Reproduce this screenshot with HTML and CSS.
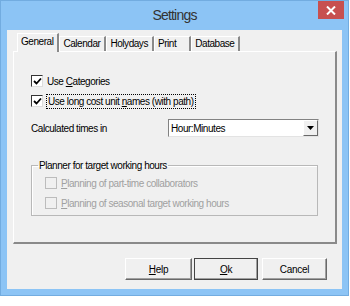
FILE: index.html
```html
<!DOCTYPE html>
<html lang="en">

<head>
    <meta charset="UTF-8">
    <meta name="viewport" content="width=device-width, initial-scale=1.0">
    <title>Settings</title>
    <link rel="stylesheet" href="styles.css">
</head>

<body>
    <div class="window">
        <div class="titlebar">
            <span></span>
            <span class="title">Settings</span>
            <button class="close">
                <svg width="10" height="9" viewBox="0 0 10 9"><path d="M1 0.5 L9 8.5 M9 0.5 L1 8.5" stroke="#fff" stroke-width="2"/></svg>
            </button>
        </div>
        <div class="client">
            <div class="tabs">
                <div class="tab active">General</div>
                <div class="tab">Calendar</div>
                <div class="tab">Holydays</div>
                <div class="tab tab-print">Print</div>
                <div class="tab">Database</div>
            </div>
            <div class="panel">
                <label class="check">
                    <span class="box"><svg width="9" height="9" viewBox="0 0 9 9"><path d="M1 4 L3.5 6.5 L8 1.5" stroke="#000" stroke-width="1.8" fill="none"/></svg></span>
                    <span>Use <u>C</u>ategories</span>
                </label>
                <label class="check">
                    <span class="box"><svg width="9" height="9" viewBox="0 0 9 9"><path d="M1 4 L3.5 6.5 L8 1.5" stroke="#000" stroke-width="1.8" fill="none"/></svg></span>
                    <span class="focus">Use long cost unit <u>n</u>ames (with path)</span>
                </label>
                <div class="row">
                    <span class="row-label">Calculated times in</span>
                    <div class="combo">
                        <span class="combo-text">Hour:Minutes</span>
                        <span class="combo-btn"><svg width="7" height="4" viewBox="0 0 7 4"><path d="M0 0 H7 L3.5 4 Z" fill="#000"/></svg></span>
                    </div>
                </div>
                <fieldset class="group">
                    <legend>Planner for target working hours</legend>
                    <label class="check disabled">
                        <span class="box"></span>
                        <span><u>P</u>lanning of part-time collaborators</span>
                    </label>
                    <label class="check disabled">
                        <span class="box"></span>
                        <span><u>P</u>lanning of seasonal target working hours</span>
                    </label>
                </fieldset>
            </div>
            <div class="buttons">
                <button class="btn btn-help"><u>H</u>elp</button>
                <button class="btn btn-ok"><u>O</u>k</button>
                <button class="btn btn-cancel">Cancel</button>
            </div>
        </div>
    </div>
</body>

</html>
```

FILE: styles.css
```css
* {
    margin: 0;
    padding: 0;
    box-sizing: border-box;
}

body {
    background-color: #fff;
    font-family: "Liberation Sans", Arial, sans-serif;
    font-size: 10px;
    letter-spacing: -0.45px;
    color: #000;
}

.window {
    width: 349px;
    height: 296px;
    background-color: #8cc4f5;
    border: 1px solid #72ace0;
    display: flex;
    flex-direction: column;
}

.titlebar {
    height: 29px;
    display: grid;
    grid-template-columns: 1fr auto 1fr;
    align-items: start;
}

.title {
    font-size: 14px;
    letter-spacing: -0.8px;
    color: #333;
    padding-top: 6px;
}

.close {
    justify-self: end;
    margin-right: 4px;
    width: 26px;
    height: 18px;
    border: none;
    background-color: #c75050;
    display: flex;
    align-items: center;
    justify-content: center;
}

.client {
    flex: 1;
    margin: 0 6px 6px 6px;
    background-color: #f0f0f0;
    padding: 3px 5px 0 6px;
}

.tabs {
    display: flex;
    padding-left: 4px;
    height: 18px;
    align-items: flex-end;
    position: relative;
    z-index: 1;
}

.tab {
    height: 15px;
    padding: 0 4px 0 3px;
    border-left: 1px solid #fff;
    border-top: 1px solid #fff;
    border-right: 2px solid #8a8a8a;
    line-height: 13px;
}

.tab-print {
    padding-right: 13px;
}

.tab.active {
    height: 19px;
    margin-bottom: -1px;
    padding: 0 4px 0 3px;
    background-color: #f0f0f0;
    line-height: 15px;
}

.panel {
    height: 193px;
    border-left: 1px solid #fff;
    border-top: 1px solid #fff;
    border-right: 2px solid #8a8a8a;
    border-bottom: 2px solid #8a8a8a;
    padding: 19px 0 0 17px;
    display: flex;
    flex-direction: column;
}

.check {
    display: flex;
    align-items: center;
    gap: 4px;
    height: 20px;
}

.box {
    width: 12px;
    height: 12px;
    border: 1px solid #333;
    border-right-color: #ddd;
    border-bottom-color: #ddd;
    background-color: #fff;
    display: flex;
    align-items: center;
    justify-content: center;
}

.focus {
    outline: 1px dotted #000;
    padding: 1px 1px;
}

.row {
    display: flex;
    align-items: center;
    margin-top: 8px;
    height: 18px;
}

.row-label {
    width: 137px;
}

.combo {
    width: 151px;
    height: 18px;
    background-color: #fff;
    border: 1px solid #828282;
    border-right-color: #e3e3e3;
    border-bottom-color: #e3e3e3;
    display: flex;
    align-items: center;
    justify-content: space-between;
    padding-left: 2px;
}

.combo-btn {
    width: 15px;
    height: 16px;
    background-color: #f0f0f0;
    border-right: 1px solid #696969;
    border-bottom: 1px solid #696969;
    border-left: 1px solid #fff;
    border-top: 1px solid #fff;
    display: flex;
    align-items: center;
    justify-content: center;
}

.group {
    margin-top: 23px;
    width: 287px;
    height: 56px;
    border: 1px solid #b8b8b8;
    box-shadow: 1px 1px 0 #fff inset;
    padding: 2px 0 0 13px;
}

.group legend {
    padding: 0 1px;
    margin-left: -7px;
}

.check.disabled {
    color: #a0a0a0;
}

.check.disabled .box {
    border-color: #bcbcbc;
    background-color: #f0f0f0;
}

.buttons {
    display: flex;
    justify-content: flex-end;
    margin-top: 14px;
    padding-right: 10px;
}

.btn {
    height: 22px;
    font-family: inherit;
    font-size: 10px;
    letter-spacing: -0.3px;
    background-color: #f0f0f0;
    border: 1px solid #fff;
    border-right-color: #696969;
    border-bottom-color: #696969;
    box-shadow: -1px -1px 0 #a0a0a0 inset;
}

.btn-help {
    width: 67px;
}

.btn-ok {
    width: 64px;
    margin-left: 2px;
    margin-right: 4px;
    border: 1px solid #444;
}

.btn-cancel {
    width: 65px;
}
```
